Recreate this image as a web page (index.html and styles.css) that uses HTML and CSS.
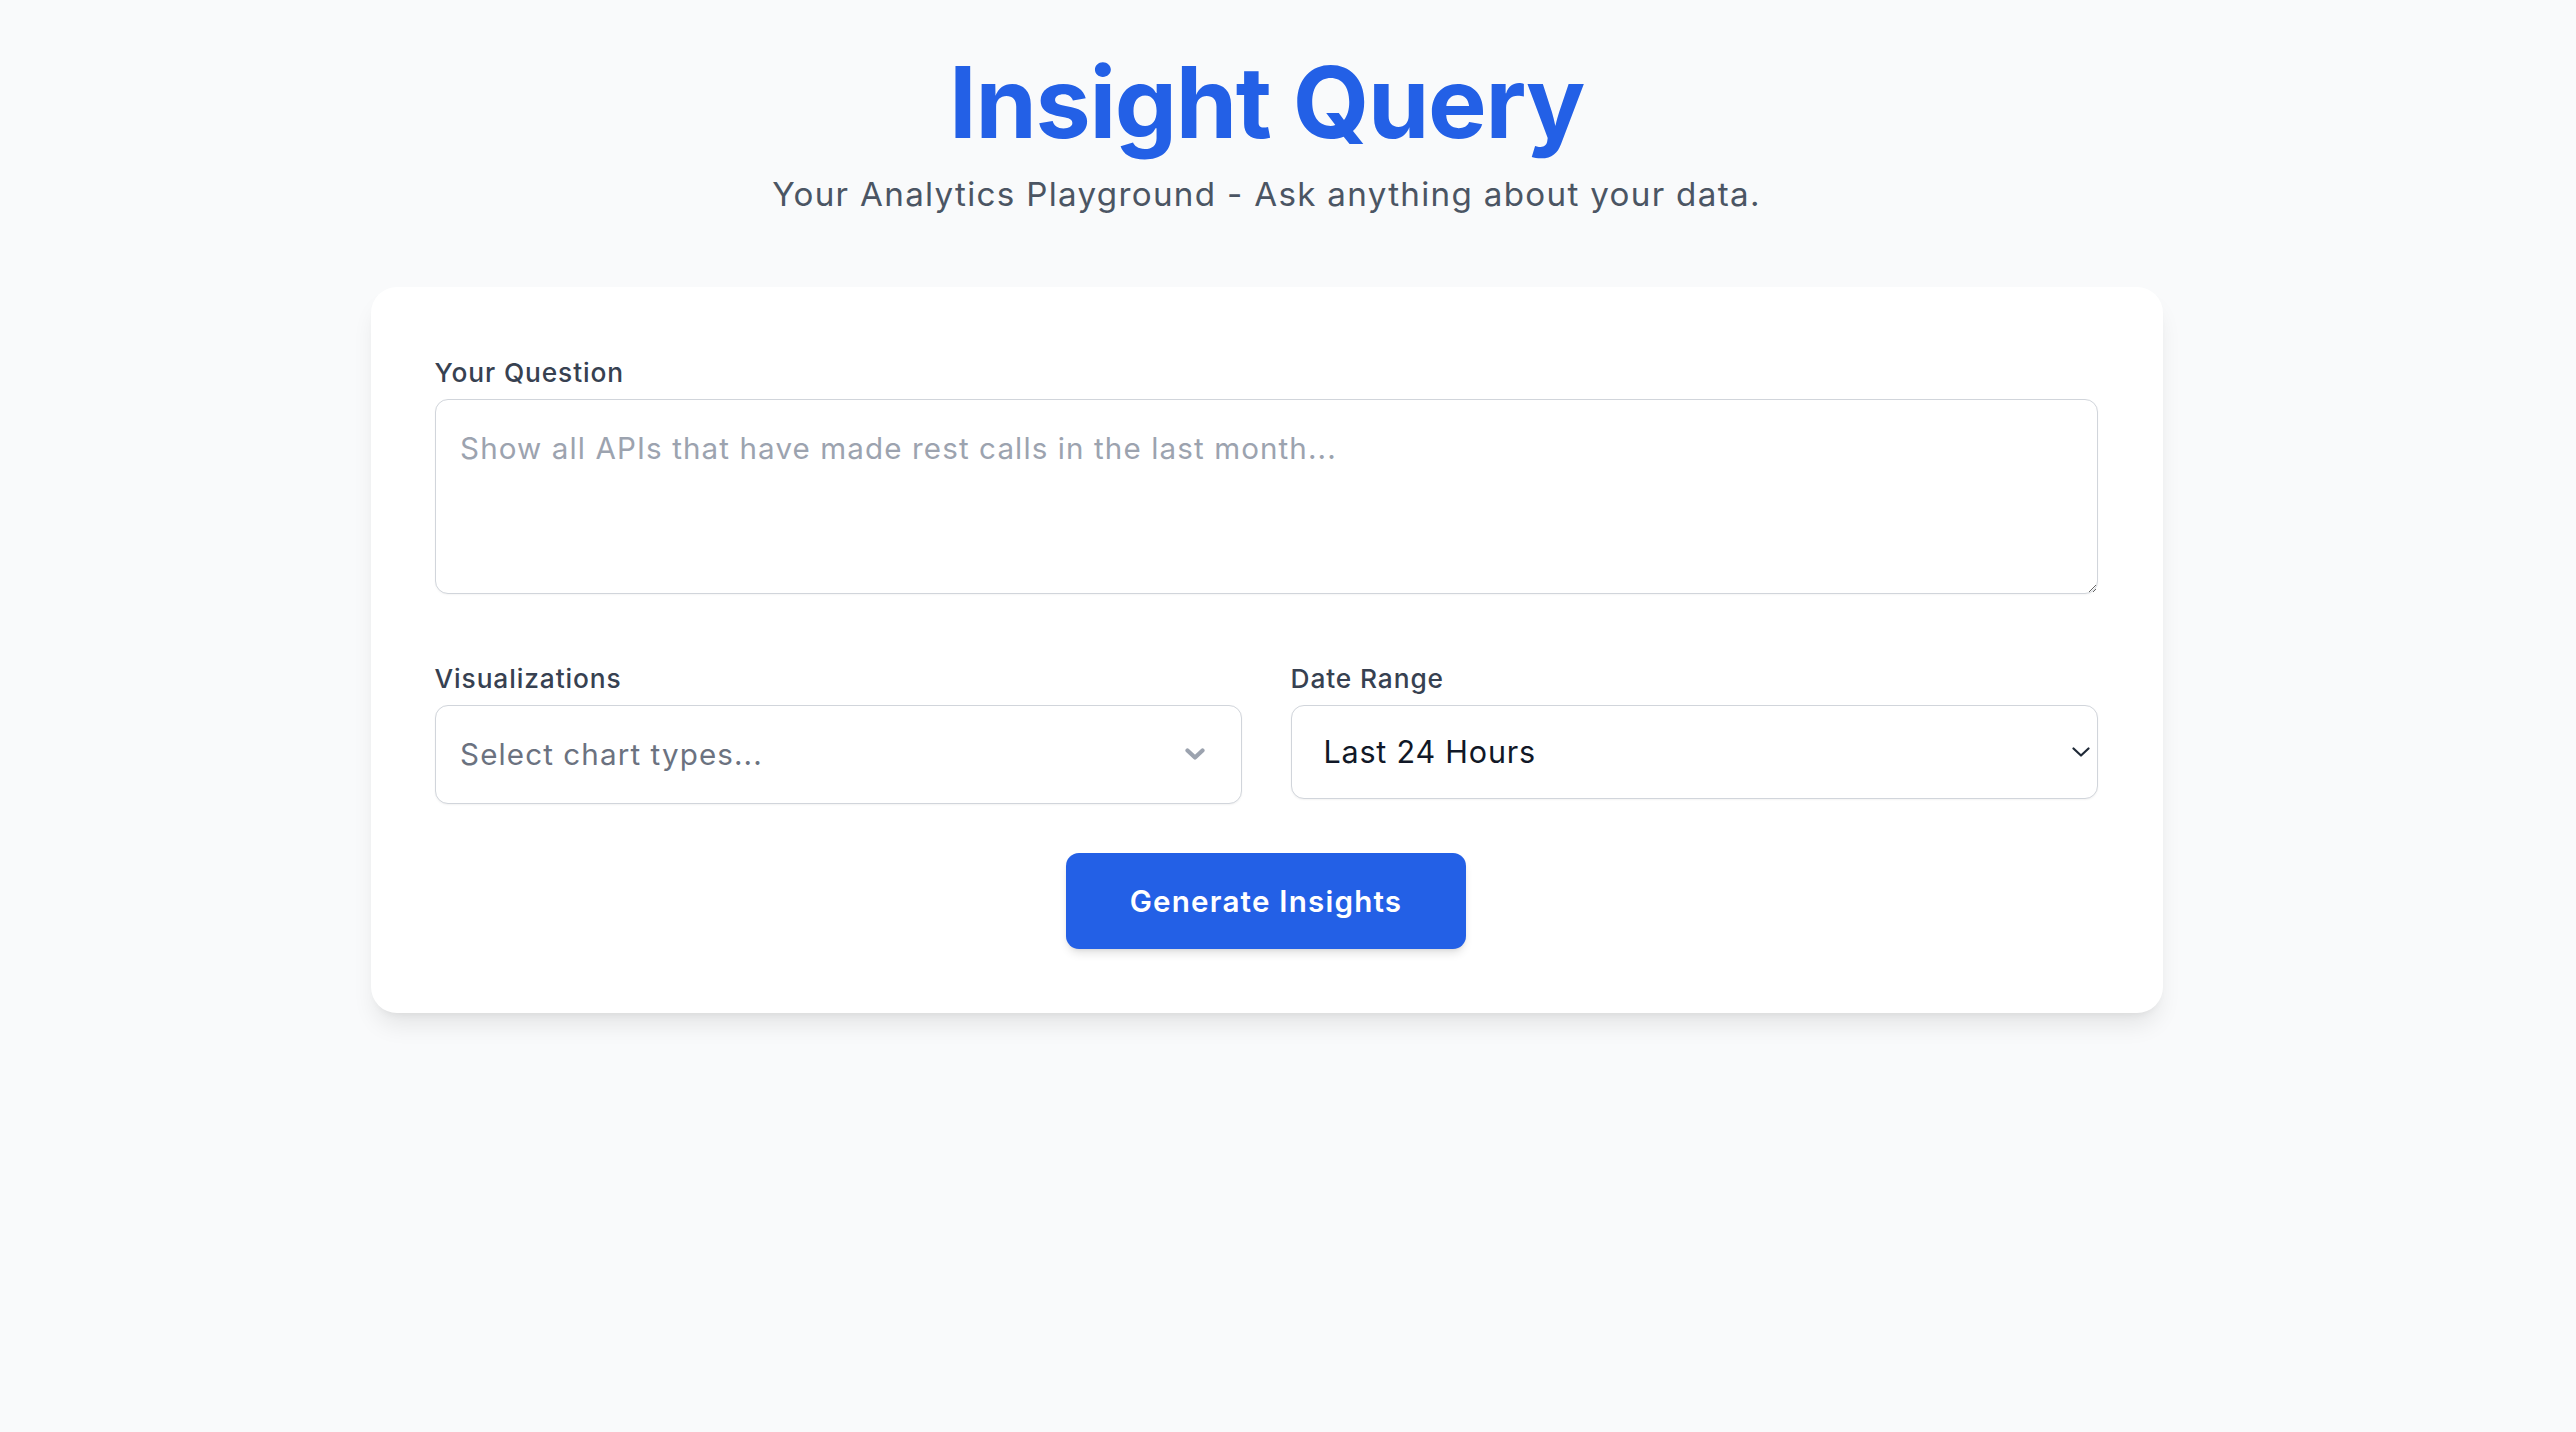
FILE: index.html
```html
<!DOCTYPE html>
<html lang="en">
<head>
<meta charset="utf-8">
<title>Insight Query</title>
<link rel="stylesheet" href="styles.css">
</head>
<body>
<div class="page">
  <header class="hero">
    <h1 class="title">Insight Query</h1>
    <p class="subtitle">Your Analytics Playground - Ask anything about your data.</p>
  </header>
  <main class="card">
    <label class="label" for="question">Your Question</label>
    <textarea id="question" class="question" placeholder="Show all APIs that have made rest calls in the last month..."></textarea>
    <div class="grid">
      <div class="field">
        <div class="label">Visualizations</div>
        <button class="multi" type="button">
          <span class="multi-text">Select chart types...</span>
          <svg class="multi-chev" viewBox="0 0 20 12" width="20" height="12" aria-hidden="true"><path d="M2.5 2.5 L10 9.5 L17.5 2.5" fill="none" stroke="#9ca3af" stroke-width="4.2" stroke-linecap="round" stroke-linejoin="round"/></svg>
        </button>
      </div>
      <div class="field">
        <label class="label" for="range">Date Range</label>
        <div class="select-wrap">
          <select id="range" class="select">
            <option>Last 24 Hours</option>
            <option>Last 7 Days</option>
            <option>Last 30 Days</option>
          </select>
          <svg class="select-chev" viewBox="0 0 18 10" width="18" height="10" aria-hidden="true"><path d="M1.5 1.5 L9 8.5 L16.5 1.5" fill="none" stroke="#1f2937" stroke-width="2.2" stroke-linecap="round" stroke-linejoin="round"/></svg>
        </div>
      </div>
    </div>
    <div class="actions">
      <button class="primary" type="button">Generate Insights</button>
    </div>
  </main>
</div>
</body>
</html>
```
FILE: styles.css
```css
* { box-sizing: border-box; }
html, body { margin: 0; padding: 0; }
body {
  background: #f9fafb;
  font-family: Inter, "Noto Sans", "Liberation Sans", sans-serif;
  color: #1f2937;
  min-height: 1432px;
}
.page {
  display: flex;
  flex-direction: column;
  align-items: center;
  padding: 53px 43px 60px 0;
}
.hero { text-align: center; }
.title {
  margin: 0;
  font-size: 98.6px;
  line-height: 98.6px;
  font-weight: 700;
  color: #2360e6;
  letter-spacing: -1.3px;
}
.subtitle {
  margin: 19.7px 0 0;
  font-size: 33.2px;
  line-height: 46px;
  color: #4b5563;
  letter-spacing: 1.3px;
}
.card {
  margin-top: 70px;
  width: 1792px;
  background: #ffffff;
  border-radius: 26px;
  padding: 66px 65px 64px 64px;
  box-shadow: 0 16px 25px -5px rgba(0,0,0,0.09), 0 6px 10px -6px rgba(0,0,0,0.08);
}
.label {
  display: block;
  font-size: 26.3px;
  line-height: 39.4px;
  font-weight: 500;
  color: #374151;
  margin-bottom: 6.6px;
  letter-spacing: 0.9px;
}
.question {
  display: block;
  width: 100%;
  height: 195px;
  border: 1.6px solid #d1d5db;
  border-radius: 13px;
  padding: 24.6px;
  font-family: inherit;
  font-size: 29.6px;
  line-height: 46px;
  letter-spacing: 1.1px;
  color: #111827;
  background: #fff;
  resize: vertical;
  box-shadow: 0 1px 2px rgba(0,0,0,0.04);
  outline: none;
}
.question::placeholder { color: #9ca3af; }
.grid {
  margin-top: 64.6px;
  display: grid;
  grid-template-columns: 1fr 1fr;
  column-gap: 49px;
  align-items: start;
}
.field { display: flex; flex-direction: column; }
.multi {
  display: flex;
  align-items: center;
  justify-content: space-between;
  height: 99px;
  width: 100%;
  padding: 0 36px 0 24.6px;
  border: 1.6px solid #d1d5db;
  border-radius: 13px;
  background: #fff;
  font-family: inherit;
  font-size: 29.6px;
  letter-spacing: 1.1px;
  color: #6b7280;
  text-align: left;
  box-shadow: 0 1px 2px rgba(0,0,0,0.05);
  cursor: pointer;
}
.multi-chev { flex: none; }
.select-wrap { position: relative; }
.select {
  display: block;
  width: 100%;
  height: 94px;
  appearance: none;
  -webkit-appearance: none;
  border: 1.6px solid #d1d5db;
  border-radius: 13px;
  background: #fff;
  padding: 0 60px 0 32px;
  font-family: inherit;
  font-size: 30.5px;
  letter-spacing: 0.8px;
  color: #111827;
  box-shadow: 0 1px 2px rgba(0,0,0,0.05);
  outline: none;
}
.select-chev {
  position: absolute;
  right: 8px;
  top: 42px;
  pointer-events: none;
}
.actions {
  margin-top: 49px;
  display: flex;
  justify-content: center;
}
.primary {
  width: 400px;
  height: 96px;
  border: none;
  border-radius: 13px;
  background: #2360e6;
  color: #ffffff;
  font-family: inherit;
  font-size: 29.6px;
  font-weight: 600;
  letter-spacing: 1.2px;
  box-shadow: 0 6px 10px -2px rgba(0,0,0,0.12), 0 2px 4px -2px rgba(0,0,0,0.1);
  cursor: pointer;
}
```
